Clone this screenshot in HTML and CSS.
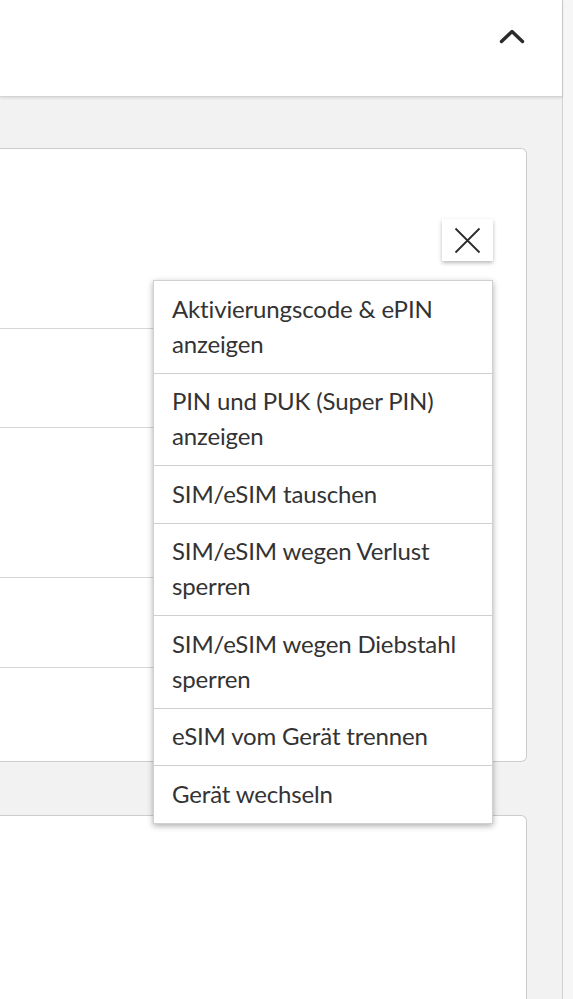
FILE: index.html
```html
<!DOCTYPE html>
<html lang="de">
<head>
<meta charset="utf-8">
<title>SIM Verwaltung</title>
<link rel="stylesheet" href="styles.css">
</head>
<body>
<div class="page">
  <div class="main">
    <header class="header">
      <svg class="chevron" width="26" height="16" viewBox="0 0 26 16" aria-hidden="true">
        <path d="M2.5 13.5 L13 3.5 L23.5 13.5" fill="none" stroke="#2b2b2b" stroke-width="3.4" stroke-linecap="round" stroke-linejoin="round"/>
      </svg>
    </header>
    <div class="content">
      <section class="card card-first">
        <div class="row row-a"></div>
        <div class="row row-b"></div>
        <div class="row row-c"></div>
        <div class="row row-d"></div>
        <div class="row row-e"></div>
        <button class="close" type="button" aria-label="Schließen">
          <svg width="27" height="27" viewBox="0 0 27 27" aria-hidden="true">
            <path d="M1.5 1.5 L25.5 25.5 M25.5 1.5 L1.5 25.5" fill="none" stroke="#2b2b2b" stroke-width="1.8"/>
          </svg>
        </button>
        <ul class="menu">
          <li class="item">Aktivierungscode &amp; ePIN anzeigen</li>
          <li class="item">PIN und PUK (Super PIN) anzeigen</li>
          <li class="item">SIM/eSIM tauschen</li>
          <li class="item">SIM/eSIM wegen Verlust sperren</li>
          <li class="item">SIM/eSIM wegen Diebstahl sperren</li>
          <li class="item">eSIM vom Gerät trennen</li>
          <li class="item">Gerät wechseln</li>
        </ul>
      </section>
      <section class="card card-second"></section>
    </div>
  </div>
  <div class="scrollbar"></div>
</div>
</body>
</html>
```

FILE: styles.css
```css
html, body {
  margin: 0;
  padding: 0;
  height: 100%;
}
body {
  background: #f2f2f2;
  font-family: Lato, "Noto Sans", "Liberation Sans", sans-serif;
  color: #333333;
  overflow: hidden;
}
.page {
  display: flex;
  height: 999px;
}
.main {
  width: 562px;
  display: flex;
  flex-direction: column;
}
.scrollbar {
  flex: 1;
  background: #f6f6f6;
  border-left: 1px solid #d2d2d2;
}
.header {
  flex: none;
  background: #ffffff;
  border-bottom: 1px solid #d4d4d4;
  box-shadow: 0 1px 3px rgba(0, 0, 0, 0.12);
  display: flex;
  align-items: flex-start;
  justify-content: flex-end;
  padding: 28px 37px 0 0;
  box-sizing: border-box;
  height: 97px;
  position: relative;
  z-index: 1;
}
.content {
  padding: 51px 35px 0 0;
  display: flex;
  flex-direction: column;
  gap: 53px;
}
.card {
  background: #ffffff;
  border: 1px solid #cccccc;
  border-left: none;
  border-radius: 0 6px 6px 0;
  padding-right: 33px;
  box-sizing: border-box;
}
.card-first {
  position: relative;
  height: 614px;
  display: flex;
  flex-direction: column;
}
.card-second {
  height: 260px;
}
.row {
  border-bottom: 1px solid #d6d6d6;
  flex: none;
}
.row-a { height: 179px; }
.row-b { height: 98px; }
.row-c { height: 149px; }
.row-d { height: 89px; }
.row-e { flex: 1; border-bottom: none; }
.close {
  position: absolute;
  top: 70px;
  right: 33px;
  width: 51px;
  height: 42px;
  padding: 0;
  border: none;
  background: #ffffff;
  box-shadow: 0 2px 4px rgba(0, 0, 0, 0.28);
  display: flex;
  align-items: center;
  justify-content: center;
}
.close svg {
  display: block;
}
.menu {
  position: absolute;
  top: 131px;
  right: 33px;
  width: 340px;
  margin: 0;
  padding: 0;
  list-style: none;
  background: #ffffff;
  border: 1px solid #d0d0d0;
  box-sizing: border-box;
  box-shadow: 0 2px 6px rgba(0, 0, 0, 0.32);
}
.item {
  font-size: 24px;
  line-height: 35px;
  padding: 9.5px 18px 12px 18px;
  border-bottom: 1px solid #cfcfcf;
  color: #333333;
  letter-spacing: -0.15px;
}
.item:last-child {
  border-bottom: none;
}
```
